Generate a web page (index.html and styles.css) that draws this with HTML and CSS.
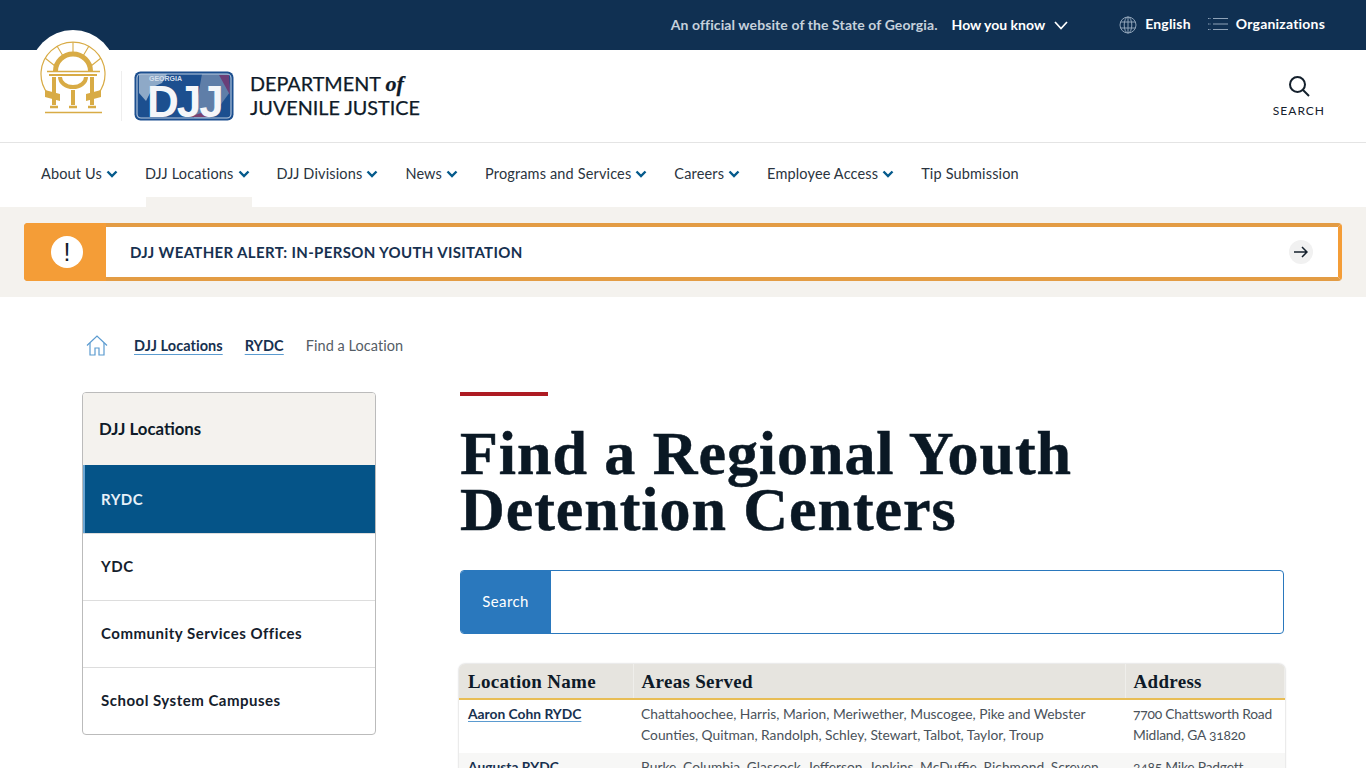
FILE: index.html
```html
<!DOCTYPE html>
<html lang="en">
<head>
<meta charset="utf-8">
<title>Find a Regional Youth Detention Centers</title>
<link rel="stylesheet" href="styles.css">
</head>
<body>
<div class="topbar">
  <span class="official">An official website of the State of Georgia.</span>
  <span class="howknow">How you know</span>
  <svg class="chev-top" width="14" height="9" viewBox="0 0 14 9"><path d="M1 1l6 6.500L13 1" fill="none" stroke="#fff" stroke-width="1.700"/></svg>
  <svg class="globe" width="18" height="18" viewBox="0 0 18 18" fill="none" stroke="#8fa3b8" stroke-width="1"><circle cx="9" cy="9" r="8"/><ellipse cx="9" cy="9" rx="3.800" ry="8"/><path d="M9 1v16M1.600 6h14.800M1.600 12h14.800"/></svg>
  <span class="toplink lang">English</span>
  <svg class="orgs" width="20" height="14" viewBox="0 0 20 14" fill="none" stroke="#8fa3b8" stroke-width="1"><path d="M5 1.500h15M5 7h15M5 12.500h15"/><path d="M0 1.500h2.500M0 7h2.500M0 12.500h2.500" stroke-dasharray="1 .5"/></svg>
  <span class="toplink">Organizations</span>
</div>

<header class="brandbar">
  <div class="seal">
    <svg width="66" height="76" viewBox="0 0 66 76" fill="none" stroke="#d8ab45">
      <path d="M8 54A32 32 0 1 1 58 54" stroke-width="1.200"/>
      <path d="M33 2v13M17 6l6 10M49 6l-6 10M5 18l10 8M61 18l-10 8" stroke-width="1.100"/>
      <path d="M15.500 31A17.500 17 0 0 1 50.500 31" stroke-width="5"/>
      <path d="M7 31.500H60" stroke-width="1.500"/>
      <path d="M9 35H57" stroke-width="2"/>
      <path d="M20 37A13 10 0 0 0 46 37" stroke-width="4"/>
      <path d="M14 37v28M33 50v15M52 37v28" stroke-width="4"/>
      <path d="M5 50l15 4v7l-15-4zM61 50l-15 4v7l15-4z" fill="#d8ab45" stroke="none"/>
      <path d="M10 67h8M29 67h8M48 67h8" stroke-width="2.500"/>
      <path d="M5 72.500h57" stroke-width="1.500"/>
    </svg>
  </div>
  <div class="brand-rule"></div>
  <svg class="djj" width="100" height="50" viewBox="0 0 100 50">
    <rect x=".5" y=".5" width="99" height="49" rx="6" fill="#1c4f8f"/>
    <path d="M5 3h28l-5 9-9 4-7 14-7-8z" fill="#8ea9c7"/>
    <path d="M68 3h26l2 18-14 19-6 7H60z" fill="#5f7ea8"/>
    <path d="M85 4h10l1 20z" fill="#6a3f78"/>
    <path d="M55 46h25l-10-5z" fill="#7a4170"/>
    <rect x="3" y="3" width="94" height="44" rx="4" fill="none" stroke="#b9cbe0" stroke-width="1.100"/>
    <text x="15" y="10" class="djj-small">GEORGIA</text>
    <text x="13" y="46" class="djj-big">DJJ</text>
  </svg>
  <div class="brand-name">
    <div class="brand-line">DEPARTMENT <em>of</em></div>
    <div class="brand-line">JUVENILE JUSTICE</div>
  </div>
  <div class="search-btn">
    <svg width="22" height="22" viewBox="0 0 22 22" fill="none" stroke="#14202c" stroke-width="2"><circle cx="9.500" cy="9.500" r="7.500"/><path d="M15 15l6 6"/></svg>
    <span>SEARCH</span>
  </div>
</header>

<nav class="mainnav">
  <a class="navitem">About Us<svg class="nchev" width="12" height="8" viewBox="0 0 12 8"><path d="M1.500 1.500L6 6l4.500-4.500" fill="none" stroke="#055a8c" stroke-width="2.400"/></svg></a>
  <a class="navitem current">DJJ Locations<svg class="nchev" width="12" height="8" viewBox="0 0 12 8"><path d="M1.500 1.500L6 6l4.500-4.500" fill="none" stroke="#055a8c" stroke-width="2.400"/></svg></a>
  <a class="navitem">DJJ Divisions<svg class="nchev" width="12" height="8" viewBox="0 0 12 8"><path d="M1.500 1.500L6 6l4.500-4.500" fill="none" stroke="#055a8c" stroke-width="2.400"/></svg></a>
  <a class="navitem">News<svg class="nchev" width="12" height="8" viewBox="0 0 12 8"><path d="M1.500 1.500L6 6l4.500-4.500" fill="none" stroke="#055a8c" stroke-width="2.400"/></svg></a>
  <a class="navitem">Programs and Services<svg class="nchev" width="12" height="8" viewBox="0 0 12 8"><path d="M1.500 1.500L6 6l4.500-4.500" fill="none" stroke="#055a8c" stroke-width="2.400"/></svg></a>
  <a class="navitem">Careers<svg class="nchev" width="12" height="8" viewBox="0 0 12 8"><path d="M1.500 1.500L6 6l4.500-4.500" fill="none" stroke="#055a8c" stroke-width="2.400"/></svg></a>
  <a class="navitem">Employee Access<svg class="nchev" width="12" height="8" viewBox="0 0 12 8"><path d="M1.500 1.500L6 6l4.500-4.500" fill="none" stroke="#055a8c" stroke-width="2.400"/></svg></a>
  <a class="navitem">Tip Submission</a>
</nav>

<section class="alertband">
  <div class="alert">
    <div class="alert-flag"><span class="alert-dot">!</span></div>
    <div class="alert-text">DJJ WEATHER ALERT: IN-PERSON YOUTH VISITATION</div>
    <span class="alert-arrow"><svg width="14" height="12" viewBox="0 0 14 12" fill="none" stroke="#14202c" stroke-width="1.500"><path d="M0 6h13M8 1l5 5-5 5"/></svg></span>
  </div>
</section>

<div class="crumbs">
  <svg class="home" width="22" height="21" viewBox="0 0 22 21" fill="none" stroke="#5b9bd0" stroke-width="1.200"><path d="M1 10.500L11 1l10 9.500"/><path d="M4 8v12h5v-7h4v7h5V8"/></svg>
  <a class="crumb">DJJ Locations</a>
  <a class="crumb">RYDC</a>
  <span class="crumb-current">Find a Location</span>
</div>

<div class="page">
  <aside class="side">
    <div class="side-head">DJJ Locations</div>
    <a class="side-item active">RYDC</a>
    <a class="side-item">YDC</a>
    <a class="side-item">Community Services Offices</a>
    <a class="side-item">School System Campuses</a>
  </aside>
  <main class="content">
    <div class="redbar"></div>
    <h1>Find a Regional Youth Detention Centers</h1>
    <div class="searchbox"><span class="search-label">Search</span><span class="search-field"></span></div>
    <div class="tablewrap">
      <table>
        <thead><tr><th class="c1">Location Name</th><th class="c2">Areas Served</th><th class="c3">Address</th></tr></thead>
        <tbody>
          <tr><td class="first"><a class="loc">Aaron Cohn RYDC</a></td><td>Chattahoochee, Harris, Marion, Meriwether, Muscogee, Pike and Webster Counties, Quitman, Randolph, Schley, Stewart, Talbot, Taylor, Troup</td><td class="addr">7700 Chattsworth Road<br>Midland, GA 31820</td></tr>
          <tr class="alt"><td class="first"><a class="loc">Augusta RYDC</a></td><td>Burke, Columbia, Glascock, Jefferson, Jenkins, McDuffie, Richmond, Screven, Warren, Washington, Wilkes</td><td class="addr">3485 Mike Padgett<br>Augusta, GA 30906</td></tr>
        </tbody>
      </table>
    </div>
  </main>
</div>
</body>
</html>
```
FILE: styles.css
```css
* { box-sizing: border-box; }
html, body { margin: 0; padding: 0; }
body { font-family: "Lato", "Noto Sans", sans-serif; color: #14202c; background: #fff; overflow-x: hidden; }

.topbar { height: 50px; background: #103052; color: #fff; display: flex; align-items: center; justify-content: flex-end; padding-right: 41px; font-size: 14px; font-weight: 700; }
.official { color: #c6d1dc; margin: 0 14px 2px 0; letter-spacing: .1px; }
.howknow { margin-bottom: 2px; }
.chev-top { margin-left: 9px; margin-right: 51px; }
.globe { margin-right: 8px; }
.toplink { margin-bottom: 4px; letter-spacing: .2px; }
.lang { margin-right: 17px; }
.orgs { margin-right: 8px; margin-bottom: 2px; }

.brandbar { position: relative; height: 93px; display: flex; align-items: center; padding-left: 121px; border-bottom: 1px solid #e4e4e4; }
.seal { position: absolute; left: 30px; top: -20px; width: 86px; height: 86px; border-radius: 50%; background: #fff; display: flex; justify-content: center; padding-top: 10px; }
.seal svg { display: block; flex: none; }
.brand-rule { width: 1px; height: 50px; background: #eee; margin-right: 12px; }
.djj { margin-right: 16px; display: block; }
.djj-small { font: 700 7px "Liberation Sans", sans-serif; fill: #d5dfeb; }
.djj-big { font: 700 44px "Liberation Sans", sans-serif; fill: #f4f6f9; letter-spacing: -2px; }
.brand-name { font-size: 19.800px; font-weight: 400; color: #0e1a28; padding-bottom: 2px; -webkit-text-stroke: .25px #0e1a28; }
.brand-line { height: 24px; line-height: 24px; }
.brand-name em { font: italic 700 22px/24px "Liberation Serif", serif; }
.search-btn { position: absolute; right: 41px; top: 25px; display: flex; flex-direction: column; align-items: center; gap: 6px; font-size: 12px; letter-spacing: 1px; }

.mainnav { height: 64px; display: flex; align-items: flex-start; padding: 22px 0 0 41px; gap: 27px; font-size: 14.500px; letter-spacing: .15px; color: #2a3440; }
.navitem { position: relative; display: flex; align-items: center; line-height: 18px; }
.nchev { margin-left: 4px; }
.current::after { content: ""; position: absolute; left: 1px; right: -2px; top: 32px; height: 10px; background: #f4f2ee; }

.alertband { height: 90px; background: #f4f2ee; padding: 16px 24px; }
.alert { height: 58px; display: flex; align-items: center; background: #fff; border: 4px solid #e39c44; border-left: 0; border-right-color: #f49d37; border-radius: 4px; padding-right: 25px; }
.alert-flag { width: 82px; height: 58px; margin: -4px 0; padding-left: 4px; background: #f49d37; border-radius: 4px 0 0 4px; display: flex; align-items: center; justify-content: center; }
.alert-dot { width: 32px; height: 32px; border-radius: 50%; background: #fff; display: flex; align-items: center; justify-content: center; font: 400 25px "Liberation Sans", sans-serif; color: #14202c; }
.alert-text { flex: 1; padding-left: 24px; font-size: 15px; font-weight: 700; color: #173150; letter-spacing: .35px; }
.alert-arrow { width: 24px; height: 24px; border-radius: 50%; background: #f1f1f1; display: flex; align-items: center; justify-content: center; }

.crumbs { display: flex; align-items: center; height: 22px; margin: 37px 0 0 86px; font-size: 14.500px; letter-spacing: .05px; }
.home { margin-right: 26px; }
.crumb { color: #173150; font-weight: 700; text-decoration: underline; text-decoration-color: #5b9bd0; margin-right: 22px; text-underline-offset: 3px; }
.crumb-current { color: #555d66; }

.page { display: flex; align-items: flex-start; padding: 36px 0 40px 82px; }
.side { width: 294px; margin-right: 84px; border: 1px solid #bbb; border-radius: 4px; overflow: hidden; font-size: 15px; font-weight: 700; letter-spacing: .5px; }
.side-head { height: 72px; background: #f4f2ee; display: flex; align-items: center; padding: 0 0 2px 16px; font-size: 16.800px; letter-spacing: 0; color: #0e1a28; }
.side-item { height: 67px; display: flex; align-items: center; padding: 0 0 2px 18px; border-top: 1px solid #ddd; color: #14202c; }
.side-item.active { background: #055488; color: #e8f1f8; border-top: 0; height: 68px; border-left: 2px solid #6ba6d3; padding: 0 0 0 16px; }

.content { width: 824px; }
.redbar { width: 88px; height: 4px; background: #ae1b23; }
h1 { margin: 29px 0 33px; font: 700 62px/56px "Liberation Serif", serif; letter-spacing: .95px; color: #0a1824; -webkit-text-stroke: .5px #0a1824; }
.searchbox { height: 64px; display: flex; border: 1px solid #2a78bd; border-radius: 4px; overflow: hidden; }
.search-label { width: 91px; margin: -1px 0 -1px -1px; padding-bottom: 2px; background: #2a78bd; color: #fff; display: flex; align-items: center; justify-content: center; font-size: 15px; letter-spacing: .4px; }
.search-field { flex: 1; }

.tablewrap { margin: 30px -1px 0; border-radius: 6px 6px 0 0; overflow: hidden; box-shadow: 0 0 2px rgba(0,0,0,.3); }
table { border-collapse: collapse; width: 100%; table-layout: fixed; font-size: 13.800px; color: #4a525a; }
th { height: 35px; background: #e6e4df; font: 700 19px "Liberation Serif", serif; letter-spacing: .3px; color: #0e1a28; text-align: left; padding: 1px 8px 0; border-bottom: 2px solid #e8bd55; border-right: 1px solid #efeeeb; }
th.c1 { width: 174px; padding-left: 9px; }
th.c2 { width: 492px; }
td { padding: 3px 8px 8px; line-height: 21px; vertical-align: top; font-feature-settings: "onum"; }
td.first { padding-left: 9px; }
td.addr { white-space: nowrap; padding-right: 0; letter-spacing: -.2px; }
tr.alt td { background: #f7f7f6; }
.loc { color: #173150; font-weight: 700; text-decoration: underline; text-decoration-color: #5b9bd0; text-underline-offset: 2px; }
```
